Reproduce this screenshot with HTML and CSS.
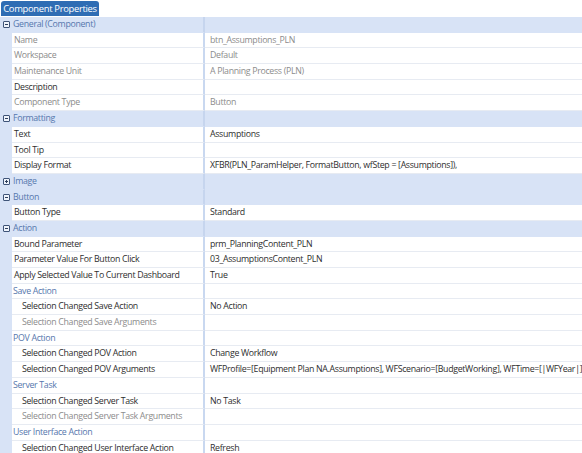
FILE: index.html
```html
<!DOCTYPE html>
<html>
<head>
<meta charset="utf-8">
<title>Component Properties</title>
<link rel="stylesheet" href="styles.css">
</head>
<body>
<div class="panel">
  <div class="tabs"><div class="tab">Component Properties</div></div>
  <div class="grid">
    <div class="row cat"><span class="exp minus"></span><span class="name">General (Component)</span><span class="val"></span></div>
    <div class="row ro"><span class="gut"></span><span class="name">Name</span><span class="val">btn_Assumptions_PLN</span></div>
    <div class="row ro"><span class="gut"></span><span class="name">Workspace</span><span class="val">Default</span></div>
    <div class="row ro"><span class="gut"></span><span class="name">Maintenance Unit</span><span class="val">A Planning Process (PLN)</span></div>
    <div class="row"><span class="gut"></span><span class="name">Description</span><span class="val"></span></div>
    <div class="row ro"><span class="gut"></span><span class="name">Component Type</span><span class="val">Button</span></div>

    <div class="row cat"><span class="exp minus"></span><span class="name">Formatting</span><span class="val"></span></div>
    <div class="row"><span class="gut"></span><span class="name">Text</span><span class="val">Assumptions</span></div>
    <div class="row"><span class="gut"></span><span class="name">Tool Tip</span><span class="val"></span></div>
    <div class="row"><span class="gut"></span><span class="name">Display Format</span><span class="val">XFBR(PLN_ParamHelper, FormatButton, wfStep = [Assumptions]),</span></div>

    <div class="row cat"><span class="exp plus"></span><span class="name">Image</span><span class="val"></span></div>

    <div class="row cat"><span class="exp minus"></span><span class="name">Button</span><span class="val"></span></div>
    <div class="row"><span class="gut"></span><span class="name">Button Type</span><span class="val">Standard</span></div>

    <div class="row cat"><span class="exp minus"></span><span class="name">Action</span><span class="val"></span></div>
    <div class="row"><span class="gut"></span><span class="name">Bound Parameter</span><span class="val">prm_PlanningContent_PLN</span></div>
    <div class="row"><span class="gut"></span><span class="name">Parameter Value For Button Click</span><span class="val">03_AssumptionsContent_PLN</span></div>
    <div class="row"><span class="gut"></span><span class="name">Apply Selected Value To Current Dashboard</span><span class="val">True</span></div>

    <div class="row sub"><span class="gut"></span><span class="name">Save Action</span><span class="val"></span></div>
    <div class="row ind"><span class="gut"></span><span class="name">Selection Changed Save Action</span><span class="val">No Action</span></div>
    <div class="row ind ro"><span class="gut"></span><span class="name">Selection Changed Save Arguments</span><span class="val"></span></div>

    <div class="row sub"><span class="gut"></span><span class="name">POV Action</span><span class="val"></span></div>
    <div class="row ind"><span class="gut"></span><span class="name">Selection Changed POV Action</span><span class="val">Change Workflow</span></div>
    <div class="row ind"><span class="gut"></span><span class="name">Selection Changed POV Arguments</span><span class="val">WFProfile=[Equipment Plan NA.Assumptions], WFScenario=[BudgetWorking], WFTime=[|WFYear|]</span></div>

    <div class="row sub"><span class="gut"></span><span class="name">Server Task</span><span class="val"></span></div>
    <div class="row ind"><span class="gut"></span><span class="name">Selection Changed Server Task</span><span class="val">No Task</span></div>
    <div class="row ind ro"><span class="gut"></span><span class="name">Selection Changed Server Task Arguments</span><span class="val"></span></div>

    <div class="row sub"><span class="gut"></span><span class="name">User Interface Action</span><span class="val"></span></div>
    <div class="row ind"><span class="gut"></span><span class="name">Selection Changed User Interface Action</span><span class="val">Refresh</span></div>
  </div>
</div>
</body>
</html>
```

FILE: styles.css
```css
html, body {
  margin: 0;
  padding: 0;
  background: #ffffff;
}

body {
  font-family: "Open Sans", "Noto Sans", sans-serif;
  font-size: 8.8px;
  letter-spacing: -0.32px;
  color: #2e2e2e;
  width: 582px;
  height: 453px;
  overflow: hidden;
}

.panel {
  display: flex;
  flex-direction: column;
}

.tabs {
  display: flex;
  padding: 1px 0 0 1px;
  height: 16px;
  box-sizing: border-box;
}

.tab {
  background: #2f6db4;
  color: #ffffff;
  font-size: 9.4px;
  letter-spacing: -0.3px;
  line-height: 15px;
  text-align: center;
  border-radius: 3px 3px 0 0;
  width: 98px;
  white-space: nowrap;
}

.grid {
  margin-top: 1px;
  display: flex;
  flex-direction: column;
}

.row {
  display: grid;
  grid-template-columns: 12px 191px 2px 1fr;
  height: 15.7px;
  line-height: 15.5px;
  white-space: nowrap;
}

.row > span {
  border-bottom: 1px solid #e7ebf2;
  overflow: hidden;
}

.gut {
  background: #d8e3f6;
  border-bottom-color: #d8e3f6 !important;
}

.name {
  grid-column: 2 / span 2;
  padding-left: 2px;
  border-right: 2px solid #c9d8f0;
}

.val {
  grid-column: 4;
  padding-left: 5px;
}

/* category headers */
.cat > span {
  background: #d8e3f6;
  border-bottom-color: #d8e3f6;
}

.cat .name {
  color: #5677ad;
  padding-left: 1px;
  border-right-color: #c6d5ee;
}

.exp {
  position: relative;
}

.exp::before {
  content: "";
  position: absolute;
  left: 3px;
  top: 4px;
  width: 5px;
  height: 5px;
  border: 1px solid #3f5478;
  border-radius: 1px;
  background: #eef3fb;
}

.exp::after {
  content: "";
  position: absolute;
  left: 5px;
  top: 7px;
  width: 3px;
  height: 1px;
  background: #2f3f5c;
}

.plus::after {
  top: 6px;
  height: 3px;
  background:
    linear-gradient(#2f3f5c, #2f3f5c) center / 3px 1px no-repeat,
    linear-gradient(#2f3f5c, #2f3f5c) center / 1px 3px no-repeat;
}

/* read-only properties */
.ro .name,
.ro .val {
  color: #8c8c8c;
}

/* sub-group labels */
.sub .name {
  color: #5677ad;
  padding-left: 1px;
}

.ind .name {
  padding-left: 10px;
}
```
